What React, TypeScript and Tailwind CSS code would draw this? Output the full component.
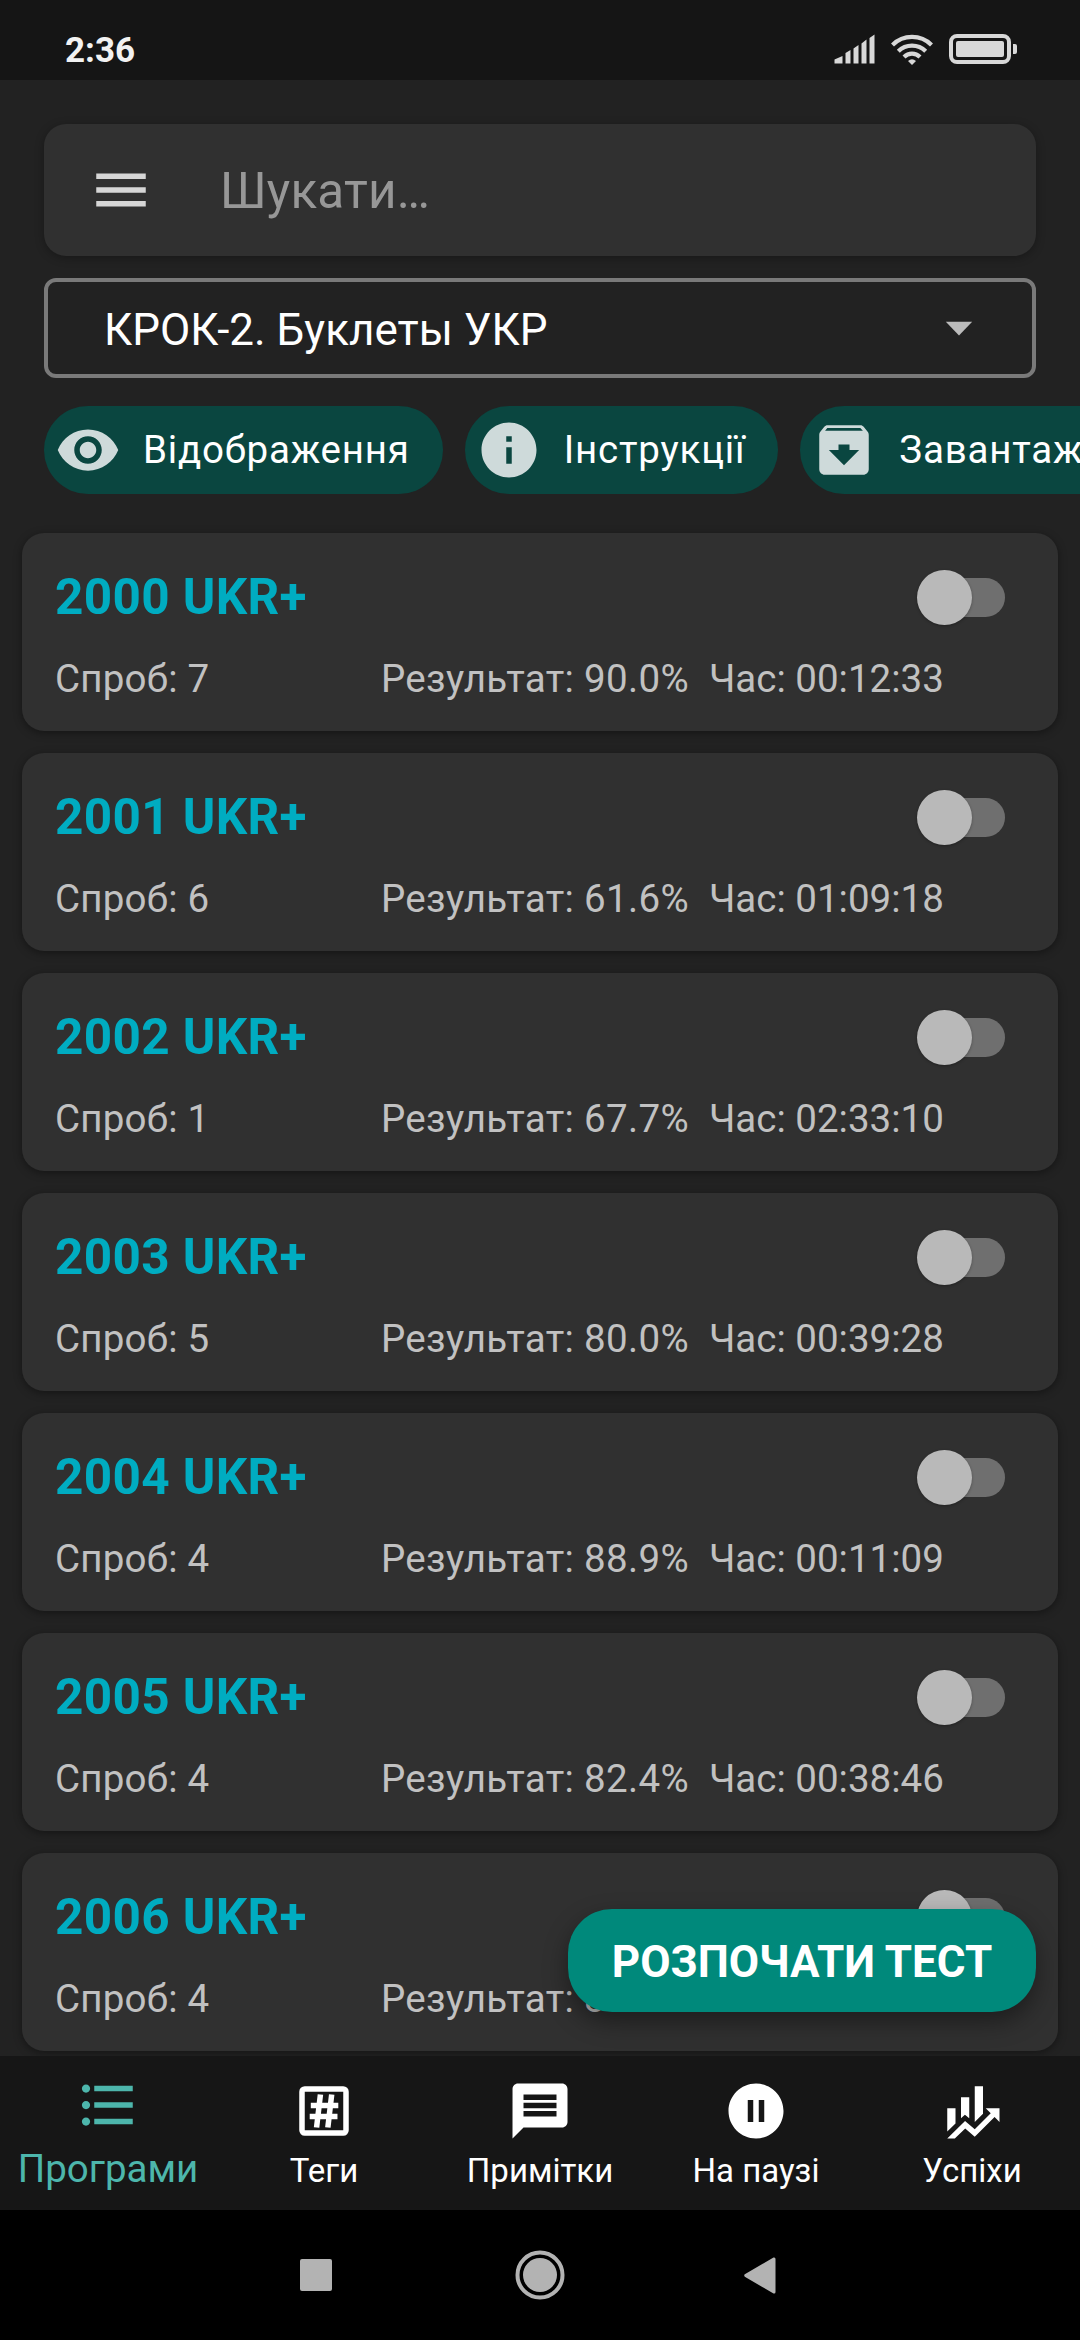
import type { ReactNode } from "react";

const tests = [
  { title: "2000 UKR+", tries: 7, result: "90.0%", time: "00:12:33" },
  { title: "2001 UKR+", tries: 6, result: "61.6%", time: "01:09:18" },
  { title: "2002 UKR+", tries: 1, result: "67.7%", time: "02:33:10" },
  { title: "2003 UKR+", tries: 5, result: "80.0%", time: "00:39:28" },
  { title: "2004 UKR+", tries: 4, result: "88.9%", time: "00:11:09" },
  { title: "2005 UKR+", tries: 4, result: "82.4%", time: "00:38:46" },
  { title: "2006 UKR+", tries: 4, result: "84.3%", time: "00:37:40" },
];

function Icon({ d, className = "" }: { d: string; className?: string }) {
  return (
    <svg viewBox="0 0 24 24" className={`size-[66px] shrink-0 ${className}`} fill="currentColor">
      <path fillRule="evenodd" d={d} />
    </svg>
  );
}

const paths = {
  menu: "M3 18h18v-2H3v2zm0-5h18v-2H3v2zm0-7v2h18V6H3z",
  eye: "M12 4.5C7 4.5 2.73 7.61 1 12c1.73 4.39 6 7.5 11 7.5s9.27-3.11 11-7.5c-1.73-4.39-6-7.5-11-7.5zM12 17c-2.76 0-5-2.24-5-5s2.24-5 5-5 5 2.24 5 5-2.24 5-5 5zm0-8c-1.66 0-3 1.34-3 3s1.34 3 3 3 3-1.34 3-3-1.34-3-3-3z",
  info: "M12 2C6.48 2 2 6.48 2 12s4.48 10 10 10 10-4.48 10-10S17.52 2 12 2zm1 15h-2v-6h2v6zm0-8h-2V7h2v2z",
  archive:
    "M20.54 5.23l-1.39-1.68C18.88 3.21 18.47 3 18 3H6c-.47 0-.88.21-1.16.55L3.46 5.23C3.17 5.57 3 6.02 3 6.5V19c0 1.1.9 2 2 2h14c1.1 0 2-.9 2-2V6.5c0-.48-.17-.93-.46-1.27zM12 17.5L6.5 12H10v-2h4v2h3.5L12 17.5zM5.12 5l.81-1h12l.94 1H5.12z",
  list: "M4 10.5c-.83 0-1.5.67-1.5 1.5s.67 1.5 1.5 1.5 1.5-.67 1.5-1.5-.67-1.5-1.5-1.5zm0-6c-.83 0-1.5.67-1.5 1.5S3.17 7.5 4 7.5 5.5 6.83 5.5 6 4.83 4.5 4 4.5zm0 12c-.83 0-1.5.68-1.5 1.5s.68 1.5 1.5 1.5 1.5-.68 1.5-1.5-.67-1.5-1.5-1.5zM7 19h14v-2H7v2zm0-6h14v-2H7v2zm0-8v2h14V5H7z",
  message: "M20 2H4c-1.1 0-1.99.9-1.99 2L2 22l4-4h14c1.1 0 2-.9 2-2V4c0-1.1-.9-2-2-2zm-2 12H6v-2h12v2zm0-3H6V9h12v2zm0-3H6V6h12v2z",
  pause: "M12 2C6.48 2 2 6.48 2 12s4.48 10 10 10 10-4.48 10-10S17.52 2 12 2zm-1 14H9V8h2v8zm4 0h-2V8h2v8z",
  finance:
    "M6,16.5L3,19.44V11H6M11,14.66L9.43,13.32L8,14.64V7H11M16,13L13,16V3H16M18.81,12.81L17,11H22V16L20.21,14.21L13,21.36L9.53,18.34L5.75,22H3L9.47,15.66L13,18.64",
};

function PoundBox() {
  return (
    <svg viewBox="0 0 24 24" className="size-[66px] shrink-0" fill="none" stroke="currentColor" strokeWidth="2">
      <rect x="4" y="4" width="16" height="16" rx="1" />
      <path d="M10.700 6l-1.400 12M14.800 6l-1.400 12M7.200 10H17.200M6.800 14H16.900" />
    </svg>
  );
}

function StatusBar() {
  return (
    <header className="flex h-20 shrink-0 items-center justify-between bg-[#151515] pt-[18px] pr-[63px] pl-[65px] text-[#f2f2f2]">
      <span className="pt-[2px] text-[35px] leading-none font-bold">2:36</span>
      <div className="flex items-center text-[#d8d8d8]">
        <svg width="41" height="30" viewBox="0 0 41 30" fill="currentColor" className="mr-4">
          <path d="M0.5 29.5v-4L8.5 22v7.5zM11.5 29.5V19l5-3v13.5zM19.5 29.5V14.5l5-3.5v18.5zM27.5 29.5V9.5l5-4v24zM35.500 29.500V4l5-3.500v29z" />
        </svg>
        <svg width="42" height="31" viewBox="0 0 42 31" fill="none" stroke="currentColor" strokeWidth="4.2" className="mr-4">
          <path d="M1.5 11a27.6 27.6 0 0 1 39 0M7.3 17.200a19.4 19.4 0 0 1 27.4 0M13 23a11.4 11.4 0 0 1 16 0" />
          <path d="M17 27q4-3.6 8 0l-4 4z" fill="currentColor" stroke="none" />
        </svg>
        <svg width="68" height="30" viewBox="0 0 68 30" fill="currentColor">
          <rect x="2" y="2" width="58" height="26" rx="6" fill="none" stroke="currentColor" strokeWidth="4" />
          <rect x="7" y="7" width="48" height="16" rx="2" />
          <path d="M64 10h2q2 0 2 2v6q0 2-2 2h-2z" />
        </svg>
      </div>
    </header>
  );
}

function Chip({ icon, children }: { icon: string; children: ReactNode }) {
  return (
    <button className="flex h-[88px] shrink-0 items-center rounded-full bg-[#0a4640] pr-[33px] pl-[11px] text-white">
      <Icon d={icon} className="text-[#cedada]" />
      <span className="ml-[22px] text-[38.5px] leading-none tracking-[0.8px] whitespace-nowrap">{children}</span>
    </button>
  );
}

function Toggle() {
  return (
    <span className="flex h-[56px] w-[88px] items-center">
      <span className="ml-[11px] h-[39px] w-[77px] shrink-0 rounded-full bg-[#6f6f6f]" />
      <span className="z-0 -ml-[88px] size-[55px] shrink-0 rounded-full bg-[#b9b9b9] shadow-[0_1px_3px_rgba(0,0,0,0.3)]" />
    </span>
  );
}

function TestCard({ title, tries, result, time }: (typeof tests)[number]) {
  return (
    <li className="flex h-[198px] shrink-0 flex-col rounded-[22px] bg-[#303030] pt-8 pr-[53px] pl-[33px] shadow-[0_2px_8px_rgba(0,0,0,0.4)]">
      <div className="flex h-[64px] items-center justify-between">
        <h2 className="text-[49.5px] leading-[64px] font-bold tracking-[0.35px] text-[#00acc1]">{title}</h2>
        <Toggle />
      </div>
      <div className="mt-6 flex text-[38.5px] leading-[52px] whitespace-nowrap text-[#c1c1c1]">
        <span className="w-[326px] tracking-[0.2px]">Спроб: {tries}</span>
        <span className="w-[328px] tracking-[0.32px]">Результат: {result}</span>
        <span>Час: {time}</span>
      </div>
    </li>
  );
}

function NavItem({ icon, label, active = false }: { icon: ReactNode; label: string; active?: boolean }) {
  return (
    <a className={active ? "flex flex-col items-center pt-4 text-[#4db6ac]" : "flex flex-col items-center pt-[22px] text-white"}>
      {icon}
      <span className={active ? "mt-2 text-[38.5px] leading-[46px]" : "mt-[7px] text-[33px] leading-[40px]"}>{label}</span>
    </a>
  );
}

export default function App() {
  return (
    <div className="relative flex h-[2340px] w-[1080px] flex-col overflow-hidden bg-[#222222] font-['Roboto',sans-serif]">
      <StatusBar />
      <section className="flex shrink-0 flex-col pt-11">
        <div className="mx-11 flex h-[132px] items-center rounded-[22px] bg-[#303030] pl-11 shadow-[0_2px_10px_rgba(0,0,0,0.3)]">
          <Icon d={paths.menu} className="text-[#d6d6d6]" />
          <span className="ml-[66px] pt-[3px] text-[49.5px] leading-none tracking-[0.2px] text-[#979797]">Шукати…</span>
        </div>
        <div className="mx-11 mt-[22px] flex h-[100px] items-center justify-between rounded-xl border-4 border-[#7a7a7a] pr-[40px] pl-[56px] text-white">
          <span className="pt-[3px] text-[44px] leading-none">КРОК-2. Буклеты УКР</span>
          <Icon d="M7.2 9.7l4.800 5 4.800-5z" className="text-[#bcbcbc]" />
        </div>
        <div className="mt-7 flex gap-[22px] overflow-hidden pl-11">
          <Chip icon={paths.eye}>Відображення</Chip>
          <Chip icon={paths.info}>Інструкції</Chip>
          <Chip icon={paths.archive}>Завантаження</Chip>
        </div>
      </section>
      <ul className="flex min-h-0 flex-1 flex-col gap-[22px] overflow-hidden px-[22px] pt-[39px]">
        {tests.map((t) => (
          <TestCard key={t.title} {...t} />
        ))}
      </ul>
      <button className="absolute top-[1909px] right-11 flex h-[103px] w-[468px] items-center justify-center rounded-[44px] bg-[#00897b] pt-[3px] text-[44px] leading-none font-bold whitespace-nowrap text-white shadow-[0_10px_24px_rgba(0,0,0,0.4)]">
        РОЗПОЧАТИ ТЕСТ
      </button>
      <nav className="grid h-[154px] shrink-0 grid-cols-5 bg-[#161616]">
        <NavItem active icon={<Icon d={paths.list} />} label="Програми" />
        <NavItem icon={<PoundBox />} label="Теги" />
        <NavItem icon={<Icon d={paths.message} />} label="Примітки" />
        <NavItem icon={<Icon d={paths.pause} />} label="На паузі" />
        <NavItem icon={<Icon d={paths.finance} />} label="Успіхи" />
      </nav>
      <footer className="flex h-[130px] shrink-0 items-center bg-black pl-[300px] text-[#b3b3b3]">
        <span className="size-8 rounded-[2px] bg-current" />
        <svg width="50" height="50" viewBox="0 0 50 50" className="ml-[183px]">
          <circle cx="25" cy="25" r="22.5" fill="none" stroke="currentColor" strokeWidth="4" />
          <circle cx="25" cy="25" r="17" fill="currentColor" />
        </svg>
        <svg width="32" height="37" viewBox="0 0 32 37" className="ml-[179px]" fill="currentColor">
          <path d="M0.8 17.3L29.5 0.5Q31.5 0 31.5 2v33q0 2-2 1.5L0.8 19.7q-1.2-1.2 0-2.4z" />
        </svg>
      </footer>
    </div>
  );
}
